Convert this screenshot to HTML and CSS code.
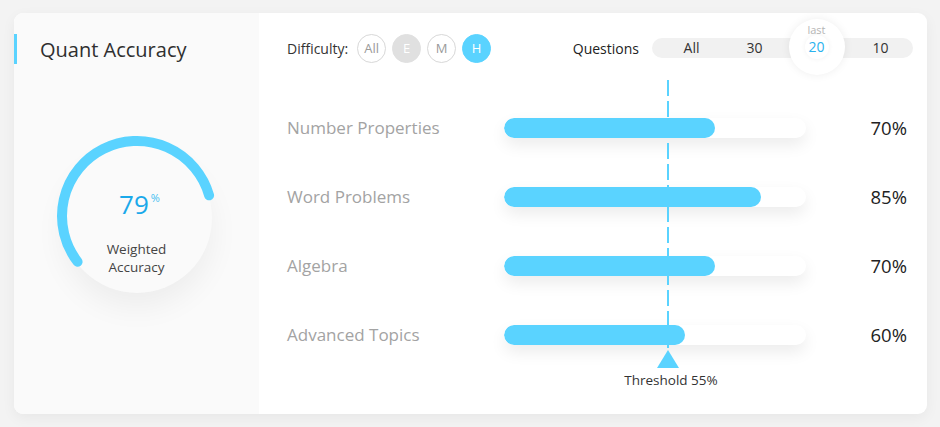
FILE: index.html
```html
<!DOCTYPE html>
<html>
<head>
<meta charset="utf-8">
<link rel="stylesheet" href="styles.css">
</head>
<body>
<div class="card">
  <aside class="left">
    <h2 class="title">Quant Accuracy</h2>
    <div class="gauge">
      <div class="gauge-disc"></div>
      <svg class="gauge-svg" width="180" height="180" viewBox="0 0 180 180">
        <path d="M30.58 135.76 A75 75 0 1 1 162.1 69.33" fill="none" stroke="#5ad3ff" stroke-width="10" stroke-linecap="round"/>
      </svg>
      <div class="gauge-text">
        <div class="gauge-value">79<sup>%</sup></div>
        <div class="gauge-label">Weighted<br>Accuracy</div>
      </div>
    </div>
  </aside>
  <main class="right">
    <div class="toolbar">
      <div class="difficulty">
        <span class="tb-label">Difficulty:</span>
        <span class="chip">All</span>
        <span class="chip chip-gray">E</span>
        <span class="chip">M</span>
        <span class="chip chip-blue">H</span>
      </div>
      <div class="questions">
        <span class="tb-label q-label">Questions</span>
        <div class="pill">
          <span class="seg">All</span>
          <span class="seg">30</span>
          <span class="seg seg-active"><span class="knob"><span class="knob-last">last</span><span class="knob-inner">20</span></span></span>
          <span class="seg">10</span>
        </div>
      </div>
    </div>
    <div class="rows">
      <div class="row">
        <span class="row-label">Number Properties</span>
        <div class="track"><div class="fill" style="width:70%"></div></div>
        <span class="row-val">70%</span>
      </div>
      <div class="row">
        <span class="row-label">Word Problems</span>
        <div class="track"><div class="fill" style="width:85%"></div></div>
        <span class="row-val">85%</span>
      </div>
      <div class="row">
        <span class="row-label">Algebra</span>
        <div class="track"><div class="fill" style="width:70%"></div></div>
        <span class="row-val">70%</span>
      </div>
      <div class="row">
        <span class="row-label">Advanced Topics</span>
        <div class="track"><div class="fill" style="width:60%"></div></div>
        <span class="row-val">60%</span>
      </div>
      <div class="threshold">
        <div class="th-line"></div>
        <div class="th-tri"></div>
        <div class="th-text">Threshold 55%</div>
      </div>
    </div>
  </main>
</div>
</body>
</html>
```
FILE: styles.css
```css
* { box-sizing: border-box; }
html, body { margin: 0; padding: 0; }
body {
  background: #f3f3f3;
  font-family: "Open Sans", "Noto Sans", sans-serif;
  color: #333;
  width: 940px;
  height: 427px;
  overflow: hidden;
}
.card {
  margin: 13px 0 0 14px;
  width: 913px;
  height: 401px;
  display: flex;
  border-radius: 9px;
  overflow: hidden;
  background: #fff;
  box-shadow: 0 4px 14px rgba(0,0,0,0.05);
}
.left {
  width: 245px;
  background: #fafafa;
  padding-top: 21px;
  display: flex;
  flex-direction: column;
}
.title {
  margin: 0;
  height: 30px;
  line-height: 32px;
  border-left: 3px solid #5ad3ff;
  padding-left: 23px;
  font-size: 20px;
  font-weight: 400;
  color: #2f2f2f;
}
.gauge {
  position: relative;
  width: 180px;
  height: 180px;
  margin: 62px auto 0;
  display: flex;
  align-items: center;
  justify-content: center;
}
.gauge-disc {
  width: 150px;
  height: 150px;
  border-radius: 50%;
  background: #fafafa;
  box-shadow: 0 14px 30px rgba(0,0,0,0.055);
  margin-top: 4px;
}
.gauge-svg { position: absolute; left: 0; top: 0; }
.gauge-text {
  position: absolute;
  left: 0; top: 0; width: 180px; height: 180px;
  display: flex;
  flex-direction: column;
  align-items: center;
  padding-top: 57px;
}
.gauge-value {
  font-size: 26px;
  line-height: 30px;
  color: #1aa9ea;
  padding-left: 6px;
}
.gauge-value sup {
  font-size: 11px;
  vertical-align: 12px;
  margin-left: 2px;
  color: #45bff0;
}
.gauge-label {
  margin-top: 21px;
  font-size: 13.5px;
  line-height: 18px;
  text-align: center;
  color: #444;
}
.right {
  flex: 1;
  padding: 20px 14px 0 28px;
  display: flex;
  flex-direction: column;
}
.toolbar {
  display: flex;
  align-items: center;
  height: 30px;
}
.difficulty { display: flex; align-items: center; gap: 6px; }
.tb-label { font-size: 14px; color: #333; margin-right: 3px; }
.chip {
  width: 29px; height: 29px;
  border-radius: 50%;
  border: 1px solid #d8d8d8;
  display: flex; align-items: center; justify-content: center;
  font-size: 13px;
  color: #9a9a9a;
  background: #fff;
}
.chip-gray { background: #e0e0e0; border-color: #e0e0e0; color: #fff; }
.chip-blue { background: #5ad3ff; border-color: #5ad3ff; color: #fff; }
.questions { margin-left: auto; display: flex; align-items: center; }
.q-label { margin-right: 13px; color: #222; }
.pill {
  width: 261px; height: 20px;
  border-radius: 10px;
  background: #f1f1f1;
  display: grid;
  grid-template-columns: repeat(4, 63px);
  padding-left: 8px;
  align-items: center;
}
.seg {
  text-align: center;
  font-size: 14px;
  color: #333;
  line-height: 20px;
  position: relative;
}
.knob {
  position: absolute;
  left: 50%; top: 50%;
  width: 56px; height: 56px;
  margin: -29px 0 0 -29px;
  border-radius: 50%;
  background: #fff;
  box-shadow: 0 0 10px rgba(0,0,0,0.07);
  display: flex; flex-direction: column; align-items: center;
}
.knob-last {
  font-size: 11px;
  color: #b5b5b5;
  line-height: 14px;
  margin-top: 4px;
}
.knob-inner {
  width: 24px; height: 24px;
  border-radius: 50%;
  box-shadow: 0 0 5px rgba(0,0,0,0.06);
  color: #2ab2ee;
  font-size: 14px;
  line-height: 24px;
  text-align: center;
  margin-top: -2px;
}
.rows {
  position: relative;
  margin-top: 55px;
  display: flex;
  flex-direction: column;
  gap: 49px;
}
.row {
  display: flex;
  align-items: center;
  height: 20px;
}
.row-label {
  width: 217px;
  font-size: 17px;
  color: #a3a3a3;
  margin-top: -2px;
}
.track {
  width: 302px;
  height: 20px;
  border-radius: 10px;
  background: #fff;
  box-shadow: 0 7px 16px rgba(0,0,0,0.08);
  overflow: hidden;
}
.fill {
  height: 100%;
  background: #5ad3ff;
  border-radius: 10px;
}
.row-val {
  margin-left: auto;
  margin-right: 6px;
  font-size: 18.5px;
  color: #222;
  margin-top: -2px;
}
.threshold {
  position: absolute;
  left: 381px;
  top: -38px;
  width: 0;
  display: flex;
  flex-direction: column;
  align-items: center;
}
.th-line {
  width: 2px;
  height: 270px;
  background: repeating-linear-gradient(to bottom, #5ad3ff 0 16px, transparent 16px 21px);
}
.th-tri {
  width: 0; height: 0;
  border-left: 11px solid transparent;
  border-right: 11px solid transparent;
  border-bottom: 18px solid #5ad3ff;
}
.th-text {
  white-space: nowrap;
  font-size: 13.5px;
  color: #333;
  margin-top: 3px;
  padding-left: 6px;
}
```
